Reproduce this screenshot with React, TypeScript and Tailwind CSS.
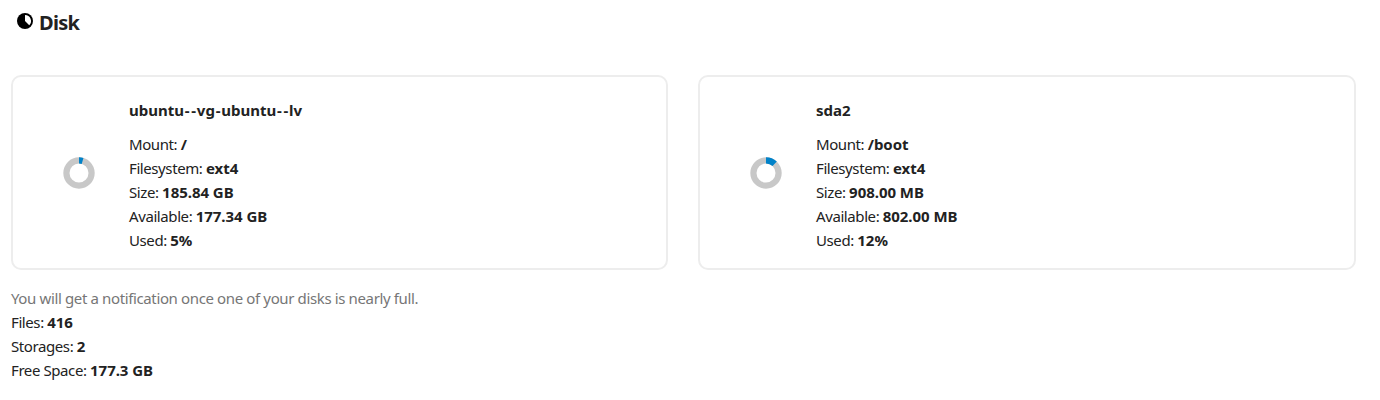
import React from 'react';

type Field = { label: string; value: string };

function Row({ label, value }: Field) {
  return (
    <div className="h-6 leading-6 whitespace-nowrap">
      <span className="tracking-[-0.41px]">{label}: </span>
      <strong className="font-bold tracking-[-0.04px]">{value}</strong>
    </div>
  );
}

function Donut({ percent }: { percent: number }) {
  const length = 2 * Math.PI * 12.6;
  return (
    <svg width="32" height="32" viewBox="0 0 32 32" fill="none" strokeWidth="6.2">
      <circle cx="16" cy="16" r="12.6" stroke="#c8c8c8" />
      <circle
        cx="16"
        cy="16"
        r="12.6"
        stroke="#0082c9"
        strokeDasharray={`${(length * percent) / 100} ${length}`}
        transform="rotate(-90 16 16)"
      />
    </svg>
  );
}

function DiskName({ name }: { name: string }) {
  return (
    <h3 className="mb-[10px] h-6 leading-6 font-bold">
      {name.split(/(-)/).map((part, i) =>
        part === '-' ? <span key={i} className="pl-[0.8px] pr-[0.8px]">-</span> : part,
      )}
    </h3>
  );
}

function Card({ name, percent, rows }: { name: string; percent: number; rows: Field[] }) {
  return (
    <section className="flex h-[195px] rounded-[10px] border-2 border-[#ededed]">
      <div className="w-[116px] pt-[80px] pl-[50px]">
        <Donut percent={percent} />
      </div>
      <div className="pt-[21px]">
        <DiskName name={name} />
        {rows.map((row) => (
          <Row key={row.label} {...row} />
        ))}
      </div>
    </section>
  );
}

const disks = [
  {
    name: 'ubuntu--vg-ubuntu--lv',
    percent: 4.6,
    rows: [
      { label: 'Mount', value: '/' },
      { label: 'Filesystem', value: 'ext4' },
      { label: 'Size', value: '185.84 GB' },
      { label: 'Available', value: '177.34 GB' },
      { label: 'Used', value: '5%' },
    ],
  },
  {
    name: 'sda2',
    percent: 12,
    rows: [
      { label: 'Mount', value: '/boot' },
      { label: 'Filesystem', value: 'ext4' },
      { label: 'Size', value: '908.00 MB' },
      { label: 'Available', value: '802.00 MB' },
      { label: 'Used', value: '12%' },
    ],
  },
];

export default function App() {
  return (
    <main className="h-[400px] bg-white pl-[11px] font-['Noto_Sans',sans-serif] text-[15px] text-[#222]">
      <h2 className="flex h-[75px] pt-[8px] pl-[6px] text-[20px] leading-[30px] font-bold tracking-[-0.7px]">
        <svg className="mt-[5px] mr-[6px]" width="16" height="16" viewBox="0 0 16 16">
          <circle cx="8" cy="8" r="8" fill="#000" />
          <path d="M8 2v6l4.24 4.24A6 6 0 0 0 8 2z" fill="#fff" />
        </svg>
        Disk
      </h2>
      <div className="grid w-[1345px] grid-cols-[657px_658px] gap-[30px]">
        {disks.map((disk) => (
          <Card key={disk.name} {...disk} />
        ))}
      </div>
      <p className="mt-4 h-6 leading-6 tracking-[-0.37px] text-[#767676]">
        You will get a notification once one of your disks is nearly full.
      </p>
      <Row label="Files" value="416" />
      <Row label="Storages" value="2" />
      <Row label="Free Space" value="177.3 GB" />
    </main>
  );
}
